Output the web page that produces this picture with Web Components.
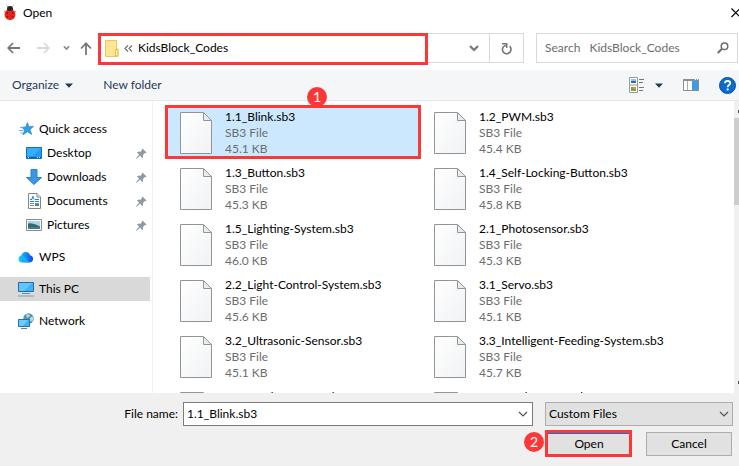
<!DOCTYPE html>
<html lang="en">
<head>
<meta charset="utf-8">
<title>Open</title>
<style>
html,body{margin:0;background:#fff}
body{font:12px/16px Lato,"Open Sans",sans-serif;color:#000}
</style>
</head>
<body>
<open-dialog></open-dialog>
<script>
const ICONS = {
  ladybug:[12,16,'<path d="M4 2 2.500 .5M8 2 9.500 .5M1 7 .3 6M11 7l.7-1" stroke="#999" fill="none"/><circle cx="6" cy="4" r="3" fill="#222"/><ellipse cx="6" cy="9.500" rx="5.500" ry="5.600" fill="#f5281e"/><path d="M2.800 5Q6 2.500 9.200 5 6 6.800 2.800 5Z" fill="#222"/><path d="M6 5.500v9" stroke="#b3201a" stroke-width=".7"/><g fill="#7a1512"><circle cx="3.300" cy="8" r=".9"/><circle cx="8.700" cy="8" r=".9"/><circle cx="3.500" cy="11.500" r=".9"/><circle cx="8.500" cy="11.500" r=".9"/></g>'],
  close:[8,10,'<path d="M.5 .5 9 9M9 .5 .5 9" stroke="#000" stroke-width="1.200" fill="none"/>'],
  back:[13,12,'<path d="M13 6H1.500M6 1 1.200 6 6 11" stroke="#777" stroke-width="1.800" fill="none"/>'],
  forward:[13,12,'<path d="M0 6h11.500M7 1l4.800 5L7 11" stroke="#dadada" stroke-width="1.800" fill="none"/>'],
  up:[12,13,'<path d="M6 13V1.500M1 6.500 6 1.300l5 5.200" stroke="#777" stroke-width="1.800" fill="none"/>'],
  tiny:[7,6,'<path d="M.8 1.200 3.500 4 6.200 1.200" stroke="#888" stroke-width="1.600" fill="none"/>'],
  chev:[10,7,'<path d="M1 1 5 5 9 1" stroke="#777" stroke-width="2.200" fill="none"/>'],
  thin:[10,7,'<path d="M1 1 5 5 9 1" stroke="#555" stroke-width="1.200" fill="none"/>'],
  folder:[14,17,'<path d="M.5.5h11v8.500h1.500v7.500H.5z" fill="#ffe594" stroke="#e9c95c"/><path d="M10.500 16V9.500h2.500V16z" fill="#fff0b8" stroke="#e3bd45"/>'],
  laquo:[9,7,'<path d="M4 .5 1 3.500l3 3M8 .5 5 3.500l3 3" stroke="#6e6e6e" stroke-width="1.200" fill="none"/>'],
  refresh:[11,13,'<path d="M8.600 4.200A4.300 4.300 0 1 1 1.500 6.500Q2 4.200 5 3.200" stroke="#777" stroke-width="1.600" fill="none"/><path d="M1 1.700h4.700v4.300" stroke="#777" stroke-width="1.500" fill="none"/>'],
  search:[12,12,'<circle cx="7.500" cy="4.200" r="3.300" stroke="#6e6e6e" stroke-width="1.500" fill="none"/><path d="M5 6.800.8 11" stroke="#6e6e6e" stroke-width="2"/>'],
  tri:[8,5,'<path d="M0 .5h8L4 4.800z" fill="#1e395b"/>'],
  view:[16,16,'<path d="M.5.5h8v15h-8zM.5 8h8" fill="#fff" stroke="#999"/><path d="M2 2h5v2H2z" fill="#8fc4f1"/><path d="M2 4h5v2H2z" fill="#2d6c9b"/><path d="M2 10h5v4H2z" fill="#76a93c"/><path d="M4 10h3v2H4z" fill="#e88a4b"/><path d="M10 2.500h5M10 5.500h4M10 10.500h5M10 13.500h4" stroke="#777"/>'],
  pane:[16,12,'<path d="M.5.5h15v11H.5z" fill="#fff" stroke="#8a8f94"/><path d="M0 0h16v2H0z" fill="#8a8f94"/><path d="M4.500 2v9" stroke="#aaa"/><path d="M9 2h6v9H9z" fill="#3e9ae6"/><path d="M12 .5h1M14 .5h1" stroke="#fff"/>'],
  help:[17,17,'<circle cx="8.500" cy="8.500" r="8" fill="#0a6ccc" stroke="#0a4f9c"/><path d="M6 6.300Q6 4 8.600 4T11.200 6.200C11.200 8 8.600 8 8.600 10.300" stroke="#fff" stroke-width="1.800" fill="none"/><path d="M7.700 11.500h1.900v1.900H7.700z" fill="#fff"/>'],
  star:[15,14,'<path d="m8.500.5 1.300 4.200 4.700-.3-3.500 3 1.700 5-4.200-2.600-4.500 3L5.500 8 2.800 5.300l3.900-.4z" fill="#2f9fe8" stroke="#1777bd" stroke-width=".6"/><path d="M1 5.500h3M0 8.500h4M1.500 11h3" stroke="#5ab4ee"/>'],
  desktop:[16,12,'<path d="M.5.5h15v11H.5z" fill="#1e9bf5" stroke="#0c71ba"/><path d="M1 1h14L7 9H1z" fill="#38acf8"/><path d="M1 10.500h14" stroke="#0a5c9c"/><path d="M2 10.500h1M11 10.500h1M13 10.500h1" stroke="#fff"/>'],
  download:[16,16,'<path d="M5 .5h6v8h4.500L8 15.500.5 8.500H5z" fill="#3b96e6" stroke="#2f7fc9"/>'],
  document:[13,16,'<path d="M.5.5h8.500l3.500 3.500v11.500H.5z" fill="#fff" stroke="#858585"/><path d="M9 .5V4h3.500" fill="#eee" stroke="#858585"/><path d="M2 6.500h2M5 3l-1.500 4M5 3.500l1 3M7 6.500h4M2 8.500h4M7 8.500h4" stroke="#1e88d8" fill="none"/><path d="M2 10.500h4M2 12.500h4" stroke="#888"/><path d="M7 10h4v3H7z" fill="#4a9060"/><path d="M7 10h4v1H7z" fill="#4aa3e0"/>'],
  picture:[16,12,'<path d="M.5.5h15v11H.5z" fill="#fff" stroke="#8a8a8a"/><path d="M2 2h12v8H2z" fill="#a8d4f2"/><path d="M2 4.500q4-1 12 3V9H2z" fill="#376c5b"/><path d="M2 8h12v2H2z" fill="#3b79a8"/>'],
  cloud:[16,12,'<defs><linearGradient id="g"><stop stop-color="#19d8e8"/><stop offset=".5" stop-color="#168bf5"/><stop offset="1" stop-color="#1546e4"/></linearGradient></defs><path d="M4 11.500a3.600 3.600 0 0 1-.7-7.100A4.500 4.500 0 0 1 12 4.200a3.700 3.700 0 0 1 0 7.300z" fill="url(#g)"/><path d="M3.500 5Q7 5 8.500 8t4 3.500H7Q5 7 3.500 5Z" fill="#20b7fb" opacity=".7"/>'],
  pc:[16,16,'<path d="M.5 1.500h15v9H.5z" fill="#3db2fb" stroke="#2a6c9c"/><path d="M1 2h13L6 10H1z" fill="#62c5fd"/><path d="M4 12.500h8" stroke="#6f8ea8"/><path d="M0 15h16" stroke="#7d9cb8"/>'],
  network:[16,16,'<circle cx="10.500" cy="5.500" r="5.200" fill="#5295ae"/><path d="M8 1.500q4-1 4 1.500L9 5Zm4 3 3-1v4l-3 1z" fill="#b9d9df"/><path d="M.5 6.500h11v7H.5z" fill="#42b2f7" stroke="#2a6c9c"/><path d="M1 7h9l-5 6H1z" fill="#6accff"/><path d="M3 15.500h6" stroke="#5d7f9b"/>'],
  pin:[11,11,'<path d="m6.500.5 4 4-1 .8-.8-.2-1.700 1.800v2.600L6 10 4 7.500.8 10.700 0 10.500 3 6.500 1 4.500l.8-.8h2.500L6 2.200 5.700 1.300z" fill="#8f9aa3"/>'],
  file:[32,42,'<defs><linearGradient id="p" x2="1" y2="1"><stop stop-color="#fff"/><stop offset="1" stop-color="#f0f2f4"/></linearGradient></defs><path d="M.5.500H23L31.500 9v32.500H.5z" fill="url(#p)" stroke="#949494"/><path d="M23.500.5v8h8z" fill="#e9ebed" stroke="#949494"/>']
};
const el = (name, html, css) => customElements.define(name, class extends HTMLElement {
  connectedCallback(){
    if (this.shadowRoot) return;
    const body = typeof html === 'function' ? html(this) : html;
    this.attachShadow({mode:'open'}).innerHTML = `<style>*{box-sizing:border-box}${css}</style>${body}`;
  }
});
const attr = (e, n) => e.getAttribute(n) || '';

el('ui-icon', e => {
  const [w,h,s] = ICONS[attr(e,'name')];
  return `<svg width="${w}" height="${h}" viewBox="0 0 ${w} ${h}" aria-hidden="true">${s}</svg>`;
}, ':host{display:inline-flex;flex:none}svg{display:block}');

el('call-out', '<slot></slot>', `
:host{position:absolute;display:block;box-sizing:border-box;border:3px solid #fc3737;pointer-events:none}
:host([badge]){width:20px;height:20px;border:0;border-radius:50%;background:#fc3737;color:#fff;font-size:14px;line-height:20px;text-align:center}`);

el('title-bar', `<ui-icon name="ladybug"></ui-icon><h1><slot></slot></h1><button aria-label="Close"><ui-icon name="close"></ui-icon></button>`, `
:host{display:flex;align-items:center;height:26px;padding-left:4px;gap:7px}
h1{flex:1;margin:0;font-size:12px;font-weight:400}
button{border:0;background:none;padding:0}`);

el('address-row', `
<button class="back" aria-label="Back"><ui-icon name="back"></ui-icon></button>
<button class="fwd" aria-label="Forward"><ui-icon name="forward"></ui-icon></button>
<button class="recent" aria-label="Recent locations"><ui-icon name="tiny"></ui-icon></button>
<button class="up" aria-label="Up"><ui-icon name="up"></ui-icon></button>
<nav><ui-icon name="folder"></ui-icon><ui-icon name="laquo"></ui-icon><a href="#codes">KidsBlock_Codes</a>
<button class="drop" aria-label="Previous locations"><ui-icon name="chev"></ui-icon></button>
<button class="refresh" aria-label="Refresh"><ui-icon name="refresh"></ui-icon></button>
<call-out></call-out></nav>
<div class="search"><input type="search" aria-label="Search KidsBlock_Codes" placeholder="Search&nbsp;&nbsp;&nbsp;KidsBlock_Codes"><ui-icon name="search"></ui-icon></div>`, `
:host{display:flex;padding:7px 1px 7px 0}
button{display:flex;align-items:center;justify-content:center;border:0;background:none;padding:0;height:30px}
.back{width:26px}.fwd{width:34px}.recent{width:13px}.up{width:25px}
nav{position:relative;flex:1;display:flex;align-items:center;height:30px;border:1px solid #d9d9d9;padding-left:6px;gap:5px}
a{flex:1;color:#000;text-decoration:none}
.drop{width:30px}.refresh{width:34px;border-left:1px solid #d9d9d9;margin-left:-5px}
call-out{inset:-1px 95px -3px -1px}
.search{width:202px;height:30px;margin-left:12px;display:flex;align-items:center;border:1px solid #d9d9d9;padding:0 8px}
input{flex:1;min-width:0;border:0;outline:0;padding:0;background:none;font:inherit}
input::placeholder{color:#6d6d6d;opacity:1}`);

el('command-bar', `
<button>Organize<ui-icon name="tri"></ui-icon></button><button class="new">New folder</button>
<button aria-label="View"><ui-icon name="view"></ui-icon><ui-icon name="tri" class="t"></ui-icon></button>
<button aria-label="Preview pane"><ui-icon name="pane"></ui-icon></button>
<button aria-label="Help"><ui-icon name="help"></ui-icon></button>`, `
:host{display:flex;align-items:center;height:31px;padding:0 3px 0 12px;background:#f5f6f7;border-bottom:1px solid #e6e8eb;box-sizing:border-box}
button{display:flex;align-items:center;gap:6px;border:0;background:none;padding:0;font:inherit;color:#1e395b;margin-right:20px}
.new{margin:0 auto 0 10px}
.t{margin-left:4px}
button:last-child{margin:0}`);

el('nav-item', e => `<a href="#"><ui-icon name="${attr(e,'icon')}"></ui-icon><span><slot></slot></span>${e.hasAttribute('pinned')?'<ui-icon name="pin"></ui-icon>':''}</a>`, `
:host{display:block}
:host([top]){margin-top:8px}
:host([selected]){background:#d9d9d9}
a{display:flex;align-items:center;height:24px;padding:0 3px 0 18px;gap:5px;color:#000;text-decoration:none}
:host([pinned]) a{padding-left:26px}
a>ui-icon:first-child{width:16px;justify-content:center}
span{flex:1}`);

el('file-item', e => `<ui-icon name="file"></ui-icon><div><div class="n">${attr(e,'name')}</div><div>SB3 File</div><div>${attr(e,'size')}</div></div><slot></slot>`, `
:host{position:relative;display:flex;align-items:center;height:56px;padding-left:15px;gap:13px;color:#6d6d6d;box-sizing:border-box}
:host([selected]){background:linear-gradient(#cce8ff,#cce8ff) 0 0/100% 54px no-repeat}
.n{color:#000;white-space:nowrap}`);

el('file-list', '<div class="grid"><slot></slot></div><div class="bar"><i class="u"></i><i class="thumb"></i><i class="d"></i></div>', `
:host{display:flex;flex:1;min-width:0;min-height:0;clip-path:inset(-20px 0 0 0)}
.grid{flex:1;min-height:0;height:0;padding:4px 0 0 12px;display:grid;grid-template-columns:repeat(auto-fill,254px);grid-auto-rows:56px}
.bar{width:5px;background:#f0f0f0;display:flex;flex-direction:column;align-items:flex-end;padding:9px 0}
.thumb{width:5px;height:87px;margin-top:5px;background:#cdcdcd}
.u,.d{width:1px;height:3px;background:#505050}.d{margin-top:auto}`);

el('dialog-footer', `
<div class="row"><label for="fn">File name:</label>
<div class="combo"><input id="fn" type="text" value="1.1_Blink.sb3"><button class="dd" aria-label="File name history"><ui-icon name="thin"></ui-icon></button></div>
<div class="sel"><select aria-label="File type"><option>Custom Files</option></select><ui-icon name="thin"></ui-icon></div></div>
<div class="row act"><div class="primary"><button class="b">Open</button><call-out class="f"></call-out><call-out badge class="k">2</call-out></div><button class="b">Cancel</button></div>`, `
:host{display:flex;flex-direction:column;gap:6px;background:#f0f0f0;padding:9px 6px 10px 0}
.row{display:flex;align-items:center}
label{width:183px;padding-right:5px;text-align:right}
.combo{flex:1;display:flex;height:24px;border:1px solid #7a7a7a;background:#fff}
input{flex:1;min-width:0;border:0;outline:0;padding:0 0 0 3px;font:inherit;background:none}
.dd{border:0;background:none;padding:0;width:18px;display:flex;align-items:center;justify-content:center}
.sel{display:grid;width:188px;margin-left:12px;align-items:center}
.sel>*{grid-area:1/1}
.sel ui-icon{justify-self:end;margin-right:4px;pointer-events:none}
select{appearance:none;width:100%;height:24px;border:1px solid #adadad;border-radius:0;background:#e1e1e1;font:inherit;color:#000;padding:0 3px}
.act{justify-content:flex-end;gap:14px;padding-right:1px}
.primary{position:relative}
.b{display:block;width:86px;height:24px;border:1px solid #adadad;background:#e1e1e1;font:inherit;color:#000;padding:0}
.primary .b{border:2px solid #0078d7}
.f{inset:-2px 0 -1px -1px}
.k{left:-22px;top:0}`);

const FILES = [['1.1_Blink.sb3','45.1'],['1.2_PWM.sb3','45.4'],['1.3_Button.sb3','45.3'],['1.4_Self-Locking-Button.sb3','45.8'],['1.5_Lighting-System.sb3','46.0'],['2.1_Photosensor.sb3','45.3'],['2.2_Light-Control-System.sb3','45.6'],['3.1_Servo.sb3','45.1'],['3.2_Ultrasonic-Sensor.sb3','45.1'],['3.3_Intelligent-Feeding-System.sb3','45.7'],['4.1_Reader-Sensor.sb3','45.2'],['4.2_Reader-Tones.sb3','45.5']];
el('open-dialog', `
<title-bar>Open</title-bar><address-row></address-row><command-bar></command-bar>
<main><aside>
<nav-item icon="star">Quick access</nav-item>
<nav-item icon="desktop" pinned>Desktop</nav-item>
<nav-item icon="download" pinned>Downloads</nav-item>
<nav-item icon="document" pinned>Documents</nav-item>
<nav-item icon="picture" pinned>Pictures</nav-item>
<nav-item icon="cloud" top>WPS</nav-item>
<nav-item icon="pc" top selected>This PC</nav-item>
<nav-item icon="network" top>Network</nav-item>
</aside><file-list>${FILES.map(([n,s],i)=>`<file-item name="${n}" size="${s} KB"${i?'':' selected'}>${i?'':'<call-out class="frame"></call-out><call-out badge class="one">1</call-out>'}</file-item>`).join('')}</file-list></main>
<dialog-footer></dialog-footer>`, `
:host{display:flex;flex-direction:column;height:100vh;overflow:hidden}
title-bar,address-row,command-bar,dialog-footer{flex:none}
main{flex:1;min-height:0;display:flex}
aside{width:153px;border-right:1px solid #f0f0f0;padding:16px 2px 0 0}
.frame{inset:0 -2px 2px 0}
.one{left:142px;top:-18px}`);
</script>
</body>
</html>
